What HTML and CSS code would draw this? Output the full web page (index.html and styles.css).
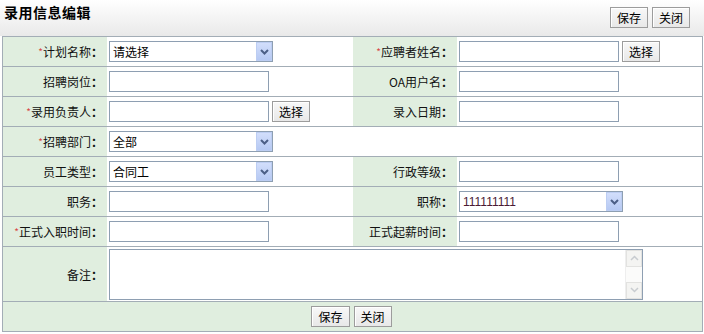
FILE: index.html
```html
<!DOCTYPE html>
<html lang="zh-CN">
<head>
<meta charset="utf-8">
<title>录用信息编辑</title>
<link rel="stylesheet" href="styles.css">
</head>
<body>
<div class="head">
  <h1 class="title">录用信息编辑</h1>
  <div class="head-actions">
    <button class="btn">保存</button>
    <button class="btn">关闭</button>
  </div>
</div>
<table class="form">
  <colgroup><col class="c-l1"><col class="c-v1"><col class="c-l2"><col class="c-v2"></colgroup>
  <tr>
    <th><span class="req">*</span>计划名称<span class="colon">：</span></th>
    <td><span class="sel"><select><option>请选择</option></select><span class="arrow"><svg width="9" height="6" viewBox="0 0 9 6"><path d="M1 1 L4.5 4.5 L8 1" fill="none" stroke="#4c5f86" stroke-width="2"/></svg></span></span></td>
    <th><span class="req">*</span>应聘者姓名<span class="colon">：</span></th>
    <td><input class="txt" type="text"><button class="btn pick">选择</button></td>
  </tr>
  <tr>
    <th>招聘岗位<span class="colon">：</span></th>
    <td><input class="txt" type="text"></td>
    <th>OA用户名<span class="colon">：</span></th>
    <td><input class="txt" type="text"></td>
  </tr>
  <tr>
    <th><span class="req">*</span>录用负责人<span class="colon">：</span></th>
    <td><input class="txt" type="text"><button class="btn pick">选择</button></td>
    <th>录入日期<span class="colon">：</span></th>
    <td><input class="txt" type="text"></td>
  </tr>
  <tr>
    <th><span class="req">*</span>招聘部门<span class="colon">：</span></th>
    <td colspan="3"><span class="sel"><select><option>全部</option></select><span class="arrow"><svg width="9" height="6" viewBox="0 0 9 6"><path d="M1 1 L4.5 4.5 L8 1" fill="none" stroke="#4c5f86" stroke-width="2"/></svg></span></span></td>
  </tr>
  <tr>
    <th>员工类型<span class="colon">：</span></th>
    <td><span class="sel"><select><option>合同工</option></select><span class="arrow"><svg width="9" height="6" viewBox="0 0 9 6"><path d="M1 1 L4.5 4.5 L8 1" fill="none" stroke="#4c5f86" stroke-width="2"/></svg></span></span></td>
    <th>行政等级<span class="colon">：</span></th>
    <td><input class="txt" type="text"></td>
  </tr>
  <tr>
    <th>职务<span class="colon">：</span></th>
    <td><input class="txt" type="text"></td>
    <th>职称<span class="colon">：</span></th>
    <td><span class="sel"><select class="num"><option>111111111</option></select><span class="arrow"><svg width="9" height="6" viewBox="0 0 9 6"><path d="M1 1 L4.5 4.5 L8 1" fill="none" stroke="#4c5f86" stroke-width="2"/></svg></span></span></td>
  </tr>
  <tr>
    <th><span class="req">*</span>正式入职时间<span class="colon">：</span></th>
    <td><input class="txt" type="text"></td>
    <th>正式起薪时间<span class="colon">：</span></th>
    <td><input class="txt" type="text"></td>
  </tr>
  <tr class="memo-row">
    <th>备注<span class="colon">：</span></th>
    <td colspan="3">
      <div class="memo">
        <textarea></textarea>
        <div class="sbar">
          <span class="sbtn"><svg width="9" height="6" viewBox="0 0 9 6"><path d="M1 5 L4.5 1.5 L8 5" fill="none" stroke="#c8ccd0" stroke-width="1.5"/></svg></span>
          <span class="sbtn"><svg width="9" height="6" viewBox="0 0 9 6"><path d="M1 1 L4.5 4.5 L8 1" fill="none" stroke="#c8ccd0" stroke-width="1.5"/></svg></span>
        </div>
      </div>
    </td>
  </tr>
  <tr class="foot">
    <td colspan="4"><div class="foot-actions"><button class="btn">保存</button><button class="btn">关闭</button></div></td>
  </tr>
</table>
</body>
</html>
```

FILE: styles.css
```css
* { box-sizing: border-box; }
html, body { margin: 0; padding: 0; background: #fff; }
body {
  width: 704px;
  height: 334px;
  font-family: "Noto Sans CJK SC", "Liberation Sans", sans-serif;
  font-size: 12px;
  color: #000;
  overflow: hidden;
}
.head {
  height: 36px;
  display: flex;
  justify-content: space-between;
  align-items: flex-start;
  padding: 0 14px 0 4px;
  background: linear-gradient(#ffffff 0%, #f6f6f6 40%, #e9e9e9 100%);
}
.title {
  margin: 2px 0 0;
  font-size: 14px;
  font-weight: bold;
  line-height: 20px;
  letter-spacing: 0.5px;
}
.head-actions {
  display: flex;
  gap: 4px;
  margin-top: 7px;
}
.btn {
  height: 21px;
  padding: 0 6px;
  font-family: inherit;
  font-size: 12px;
  line-height: 19px;
  color: #000;
  background: linear-gradient(#f8f8f8, #e8e8e8);
  border: 1px solid #9c9c9c;
  border-radius: 0;
  box-shadow: inset 1px 1px 0 #fff;
}
.form {
  margin-left: 2px;
  width: 701px;
  table-layout: fixed;
  border-collapse: separate;
  border-spacing: 0;
  border: 1px solid #a3adb6;
  border-bottom: 0;
}
.c-l1 { width: 104px; }
.c-v1 { width: 246px; }
.c-l2 { width: 104px; }
.c-v2 { width: 245px; }
.form th, .form td {
  height: 30px;
  padding: 0;
  border-bottom: 1px solid #a3adb6;
  vertical-align: middle;
}
.form th {
  background: #e0eedf;
  font-weight: normal;
  text-align: right;
  padding-right: 4px;
  white-space: nowrap;
  color: #111;
}
.colon { font-family: "Noto Sans CJK TC", "Noto Sans CJK SC", sans-serif; font-weight: bold; }
.form td {
  background: #fff;
  padding-left: 2px;
  white-space: nowrap;
}
.req { color: #d84848; font-size: 10px; vertical-align: 1px; }
.txt {
  width: 160px;
  height: 21px;
  border: 1px solid #8e9fb2;
  padding: 0 3px;
  font-family: inherit;
  font-size: 12px;
  vertical-align: middle;
  background: #fff;
}
.pick { margin-left: 3px; vertical-align: middle; }
.sel {
  position: relative;
  display: inline-block;
  width: 164px;
  height: 21px;
  vertical-align: middle;
}
.sel select {
  appearance: none;
  -webkit-appearance: none;
  width: 100%;
  height: 100%;
  border: 1px solid #8e9fb2;
  border-radius: 0;
  background: #fff;
  padding: 0 3px;
  font-family: inherit;
  font-size: 12px;
  color: #000;
}
.sel select.num { color: #4a1a34; font-family: "Liberation Sans", sans-serif; }
.arrow {
  position: absolute;
  right: 1px;
  top: 1px;
  width: 16px;
  height: 19px;
  display: flex;
  align-items: center;
  justify-content: center;
  background: linear-gradient(#d2defb, #b6c9f3);
  border: 1px solid #bccdf2;
  pointer-events: none;
}
.memo-row th, .memo-row td { height: 55px; }
.memo {
  display: flex;
  width: 534px;
  height: 51px;
  border: 1px solid #8e9fb2;
  vertical-align: middle;
}
.memo textarea {
  flex: 1;
  border: 0;
  resize: none;
  outline: none;
  overflow: hidden;
  font-family: inherit;
  font-size: 12px;
}
.sbar {
  width: 17px;
  display: flex;
  flex-direction: column;
  justify-content: space-between;
  background: #fbfbfa;
  border-left: 1px solid #eeeeee;
}
.sbtn {
  height: 17px;
  display: flex;
  align-items: center;
  justify-content: center;
  background: #f4f4f2;
  border: 1px solid #e2e2e0;
}
.foot td {
  background: #e0eedf;
  padding: 0;
}
.foot-actions {
  display: flex;
  justify-content: center;
  gap: 4px;
  padding-right: 2px;
}
```
